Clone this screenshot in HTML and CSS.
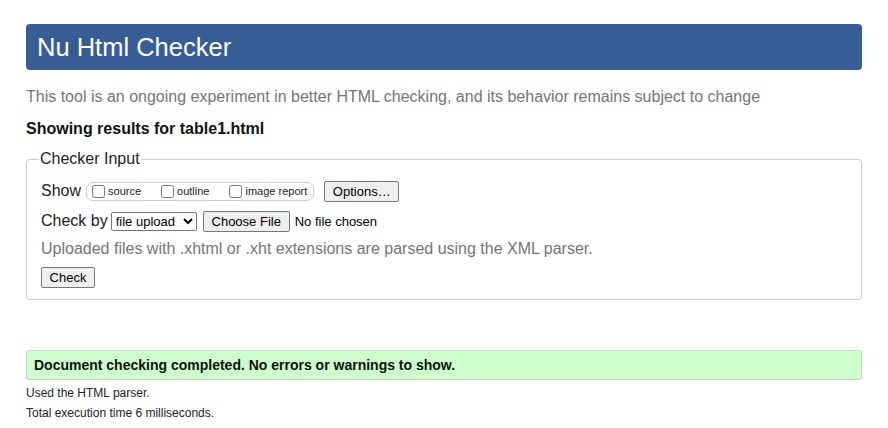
FILE: index.html
```html
<!DOCTYPE html>
<html>
<head>
<meta charset="utf-8">
<title>Nu Html Checker</title>
<link rel="stylesheet" href="styles.css">
</head>
<body>
<h1 class="banner">Nu Html Checker</h1>
<p class="intro">This tool is an ongoing experiment in better HTML checking, and its behavior remains subject to change</p>
<p class="results-for">Showing results for table1.html</p>
<fieldset class="checker">
  <legend class="checker-legend">Checker Input</legend>
  <div class="row row-show">
    <span class="label">Show</span>
    <span class="show-box">
      <label class="opt"><input type="checkbox" class="cb">source</label>
      <label class="opt"><input type="checkbox" class="cb">outline</label>
      <label class="opt"><input type="checkbox" class="cb">image report</label>
    </span>
    <button class="btn btn-options" type="button">Options…</button>
  </div>
  <div class="row row-by">
    <span class="label">Check by</span>
    <select class="sel"><option>file upload</option></select>
    <button class="btn btn-file" type="button">Choose File</button>
    <span class="nofile">No file chosen</span>
  </div>
  <p class="note">Uploaded files with .xhtml or .xht extensions are parsed using the XML parser.</p>
  <button class="btn btn-check" type="button">Check</button>
</fieldset>
<div class="success">Document checking completed. No errors or warnings to show.</div>
<p class="detail detail-first">Used the HTML parser.</p>
<p class="detail">Total execution time 6 milliseconds.</p>
</body>
</html>
```
FILE: styles.css
```css
html, body {
  margin: 0;
  padding: 0;
  background: #fff;
}
body {
  padding: 24px 26px 0 26px;
  font-family: "Liberation Sans", Arial, sans-serif;
  color: #111;
}
.banner {
  margin: 0;
  background: #365d95;
  color: #fff;
  font-weight: normal;
  font-size: 25.5px;
  line-height: 46px;
  height: 46px;
  padding: 0 11px;
  border-radius: 4px;
}
.intro {
  margin: 18px 0 0 0;
  font-size: 16px;
  line-height: 18px;
  color: #757575;
}
.results-for {
  margin: 14px 0 0 0;
  font-size: 16px;
  line-height: 18px;
  font-weight: bold;
  color: #111;
}
.checker {
  margin: 12px 0 0 0;
  border: 1px solid #ccc;
  border-radius: 4px;
  padding: 2px 14px 11px 14px;
}
.checker-legend {
  font-size: 16px;
  padding: 0 1px;
  margin-left: -2px;
  color: #222;
}
.row {
  display: flex;
  align-items: center;
  height: 22px;
  font-size: 16px;
}
.row-show {
  margin-top: 10px;
}
.row-by {
  margin-top: 8px;
}
.label {
  margin-right: 3px;
  color: #222;
}
.show-box {
  display: inline-flex;
  align-items: center;
  border: 1px solid #ccc;
  border-radius: 7px;
  height: 17px;
  padding: 0 6px 0 5px;
  margin-left: 2px;
  font-size: 11px;
}
.opt {
  display: inline-flex;
  align-items: center;
  margin-right: 20px;
  color: #222;
}
.opt:last-child {
  margin-right: 0;
}
.cb {
  margin: 0 3px 0 0;
  width: 13px;
  height: 13px;
}
.btn {
  font-family: "Liberation Sans", Arial, sans-serif;
  font-size: 13px;
  background: #efefef;
  border: 1px solid #767676;
  border-radius: 2px;
  color: #000;
  padding: 1px 6px;
  height: 21px;
}
.btn-options {
  margin-left: 10px;
  width: 75px;
}
.sel {
  font-family: "Liberation Sans", Arial, sans-serif;
  font-size: 13px;
  height: 19px;
  width: 86px;
  margin-left: 0;
  border: 1px solid #767676;
  border-radius: 2px;
  background: #fff;
  color: #000;
  padding: 0;
}
.btn-file {
  margin-left: 6px;
  width: 87px;
}
.nofile {
  font-size: 13px;
  margin-left: 5px;
  color: #000;
}
.note {
  margin: 8px 0 0 0;
  font-size: 16px;
  line-height: 18px;
  color: #757575;
}
.btn-check {
  margin-top: 9px;
  width: 54px;
}
.success {
  margin-top: 50px;
  background: #ccffcc;
  border: 1px solid #c4d8c4;
  border-radius: 3px;
  font-size: 14px;
  font-weight: bold;
  line-height: 28px;
  padding: 0 7px;
  color: #111;
}
.detail {
  margin: 6px 0 0 0;
  font-size: 12px;
  line-height: 14px;
  color: #222;
}
.detail-first {
  margin-top: 6px;
}
```
